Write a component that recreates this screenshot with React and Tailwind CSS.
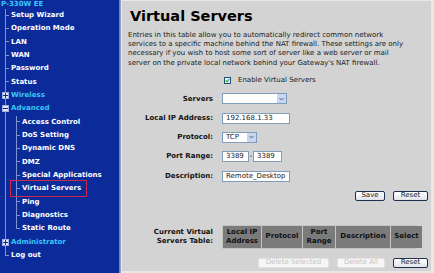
import React from "react";

const LINE = "border-[#7d93d2]";

const Box = ({ open }) => (
  <div className="ml-[2px] flex size-[7px] shrink-0 items-center justify-center border border-[#9fb0e0] bg-[#dfe6f7]">
    <div className="relative flex items-center justify-center">
      <div className="h-px w-[5px] bg-[#0c2b9b]" />
      {!open && <div className="absolute h-[5px] w-px bg-[#0c2b9b]" />}
    </div>
  </div>
);

const Gutter = ({ last, box, open, through }) => {
  if (through) {
    return (
      <div className="flex w-[11px] shrink-0 self-stretch">
        <div className={`ml-[5px] h-full border-l ${LINE}`} />
      </div>
    );
  }
  if (box) {
    return (
      <div className="flex w-[11px] shrink-0 flex-col self-stretch">
        <div className={`ml-[5px] flex-1 border-l ${LINE}`} />
        <Box open={open} />
        <div className={`ml-[5px] flex-1 ${last ? "" : `border-l ${LINE}`}`} />
      </div>
    );
  }
  return (
    <div className="flex w-[11px] shrink-0 flex-col self-stretch">
      <div className={`ml-[5px] h-1/2 w-[4px] border-b border-l ${LINE}`} />
      <div className={`ml-[5px] h-1/2 ${last ? "" : `border-l ${LINE}`}`} />
    </div>
  );
};

const Item = ({ level = 0, last, box, open, cyan, children }) => (
  <div className="flex h-[13.33px] items-center">
    {level === 1 && <Gutter through />}
    <Gutter last={last} box={box} open={open} />
    <span className={`whitespace-nowrap ${cyan ? "text-[#38c8f8]" : "text-white"}`}>{children}</span>
  </div>
);

const Sidebar = () => (
  <div className="relative w-[119px] shrink-0 bg-[#0c2b9b] text-[7px] font-bold leading-none [font-family:'DejaVu_Sans',sans-serif]">
    <div className="flex h-[9px] items-center pl-[1px] text-[#38c8f8]">P-330W EE</div>
    <Item>Setup Wizard</Item>
    <Item>Operation Mode</Item>
    <Item>LAN</Item>
    <Item>WAN</Item>
    <Item>Password</Item>
    <Item>Status</Item>
    <Item box cyan>Wireless</Item>
    <Item box open cyan>Advanced</Item>
    <Item level={1}>Access Control</Item>
    <Item level={1}>DoS Setting</Item>
    <Item level={1}>Dynamic DNS</Item>
    <Item level={1}>DMZ</Item>
    <Item level={1}>Special Applications</Item>
    <Item level={1}>Virtual Servers</Item>
    <Item level={1}>Ping</Item>
    <Item level={1}>Diagnostics</Item>
    <Item level={1} last>Static Route</Item>
    <Item box cyan>Administrator</Item>
    <Item last>Log out</Item>
    <div className="absolute left-[10px] top-[180px] h-[17px] w-[77px] border border-[#c8284a]" />
  </div>
);

const Field = ({ w, children }) => (
  <div className={`flex h-[11px] items-center border border-[#7f9db9] bg-white pl-[3px] text-[7px] text-[#222] ${w}`}>
    {children}
  </div>
);

const Select = ({ w, children }) => (
  <div className={`flex h-[11px] items-center border border-[#7f9db9] bg-white text-[7px] text-[#222] ${w}`}>
    <span className="flex-1 pl-[3px]">{children}</span>
    <span className="flex h-full w-[9px] items-center justify-center bg-[#c9d6f2]">
      <svg width="5" height="4" viewBox="0 0 5 4">
        <path d="M0.5 1 L2.5 3 L4.5 1" fill="none" stroke="#4d6185" strokeWidth="1" />
      </svg>
    </span>
  </div>
);

const Btn = ({ w, disabled, children }) => (
  <div
    className={`flex h-[10px] items-center justify-center rounded-[2px] border text-[7px] leading-none ${w} ${
      disabled
        ? "border-[#e2e2e2] bg-[#f6f6f6] text-[#c4c4c4]"
        : "border-[#1f2f4f] bg-gradient-to-b from-white to-[#dfe4ea] text-[#1a1a1a]"
    }`}
  >
    {children}
  </div>
);

const Label = ({ children }) => (
  <div className="text-right text-[7px] font-bold text-[#111]">{children}</div>
);

const Main = () => (
  <div className="flex flex-1 flex-col border border-[#e8e8e8] bg-[#d3d3d3] pl-[6px] pr-[3px] [font-family:'DejaVu_Sans',sans-serif]">
    <h1 className="mt-[7px] pl-[2px] text-[14.5px] font-bold leading-[16px] text-black">Virtual Servers</h1>
    <p className="mt-[7px] text-[7px] leading-[9.2px] text-[#1a1a1a]">
      Entries in this table allow you to automatically redirect common network
      <br />
      services to a specific machine behind the NAT firewall. These settings are only
      <br />
      necessary if you wish to host some sort of server like a web server or mail
      <br />
      server on the private local network behind your Gateway's NAT firewall.
    </p>
    <div className="mt-[7px] flex items-center gap-[7px] pl-[96px] text-[7px] text-[#1a1a1a]">
      <div className="flex size-[7px] items-center justify-center border border-[#1c5180] bg-[#f0f0f0]">
        <svg width="5" height="5" viewBox="0 0 5 5">
          <path d="M0.6 2.4 L2 3.8 L4.4 1" fill="none" stroke="#21a121" strokeWidth="1.1" />
        </svg>
      </div>
      Enable Virtual Servers
    </div>
    <div className="mt-[8px] grid grid-cols-[85px_1fr] items-center gap-x-[9px] gap-y-[8.3px]">
      <Label>Servers</Label>
      <Select w="w-[65px]" />
      <Label>Local IP Address:</Label>
      <Field w="w-[68px]">192.168.1.33</Field>
      <Label>Protocol:</Label>
      <Select w="w-[35px]">TCP</Select>
      <Label>Port Range:</Label>
      <div className="flex items-center">
        <Field w="w-[27px]">3389</Field>
        <span className="w-[4px] text-center text-[7px]">-</span>
        <Field w="w-[29px]">3389</Field>
      </div>
      <Label>Description:</Label>
      <Field w="w-[68px]">Remote_Desktop</Field>
    </div>
    <div className="mt-[9px] flex justify-end gap-[8px]">
      <Btn w="w-[30px]">Save</Btn>
      <Btn w="w-[35px]">Reset</Btn>
    </div>
    <div className="mt-[24px] grid grid-cols-[85px_1fr] items-center gap-x-[9px]">
      <div className="text-right text-[7px] font-bold leading-[8.5px] text-[#111]">
        Current Virtual
        <br />
        Servers Table:
      </div>
      <div className="grid h-[24px] w-[195px] grid-cols-[38px_40px_32px_54px_31px] gap-px border border-[#c4c4c4] bg-[#c4c4c4] text-center text-[7px] font-bold leading-[8.5px] text-[#111]">
        <div className="flex items-center justify-center bg-[#7b7b7b]">Local IP<br />Address</div>
        <div className="flex items-center justify-center bg-[#7b7b7b]">Protocol</div>
        <div className="flex items-center justify-center bg-[#7b7b7b]">Port<br />Range</div>
        <div className="flex items-center justify-center bg-[#7b7b7b]">Description</div>
        <div className="flex items-center justify-center bg-[#7b7b7b]">Select</div>
      </div>
    </div>
    <div className="mt-[9px] flex justify-end gap-[8px]">
      <Btn w="w-[71px]" disabled>Delete Selected</Btn>
      <Btn w="w-[48px]" disabled>Delete All</Btn>
      <Btn w="w-[35px]">Reset</Btn>
    </div>
  </div>
);

export default function App() {
  return (
    <div className="flex h-[273px] w-[434px] overflow-hidden bg-[#e9e9e9]">
      <Sidebar />
      <div className="w-[2px] shrink-0 bg-gradient-to-r from-[#5a6fb3] to-[#a9b2cc]" />
      <div className="flex h-[272px] flex-1 pr-[2px]">
        <Main />
      </div>
    </div>
  );
}
